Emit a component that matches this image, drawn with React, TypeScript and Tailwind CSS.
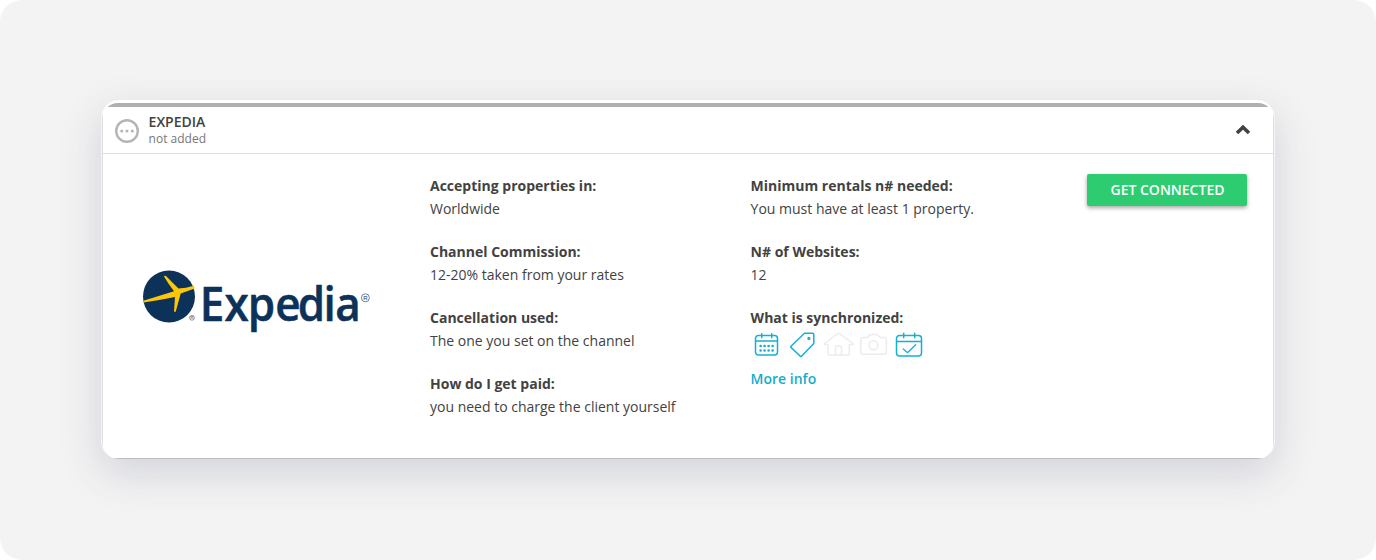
import type { ReactNode } from "react";

interface DetailProps {
  label: string;
  children: ReactNode;
}

function Detail({ label, children }: DetailProps) {
  return (
    <div className="h-[66px]">
      <dt className="font-bold leading-[23px]">{label}</dt>
      <dd className="leading-[23px]">{children}</dd>
    </div>
  );
}

function StatusIcon() {
  return (
    <svg className="mt-0.5" width="26" height="26" viewBox="0 0 26 26" fill="none">
      <circle cx="13" cy="13" r="10.8" stroke="#b5b5b5" strokeWidth="2.4" />
      <circle cx="7.7" cy="13" r="1.5" fill="#b5b5b5" />
      <circle cx="13" cy="13" r="1.5" fill="#b5b5b5" />
      <circle cx="18.3" cy="13" r="1.5" fill="#b5b5b5" />
    </svg>
  );
}

function ExpediaLogo() {
  return (
    <svg width="232" height="70" viewBox="0 0 232 70">
      <circle cx="29" cy="31.5" r="26" fill="#0c3259" />
      <path
        d="M3.3 35.8 34 26.2Q29 20 24 11.5Q23.8 10.2 26 11L38.5 23.5Q46 23.3 53.8 20.8L54.7 23.4 40.7 28.5 35.8 46.6Q34.6 47.6 34 46.2L35 32Q19 35.3 3.6 37.5Z"
        fill="#fdc608"
      />
      <circle cx="52" cy="52.8" r="2.4" fill="none" stroke="#0c3259" strokeWidth=".5" />
      <text x="50.6" y="54.3" fontSize="4" fontFamily="Liberation Sans, sans-serif" fill="#0c3259">
        R
      </text>
      <text
        x="59.7 84.5 107.8 135.2 157.8 183.6 195.3"
        y="51.6"
        transform="scale(1 1.08)"
        fontSize="44"
        fontWeight="600"
        fontFamily="Open Sans, sans-serif"
        fill="#0c3259"
        stroke="#0c3259"
        strokeWidth=".5"
        strokeLinejoin="round"
      >
        Expedia
      </text>
      <circle cx="225.4" cy="32.8" r="4" fill="none" stroke="#0c3259" strokeWidth=".6" />
      <text x="223.3" y="34.9" fontSize="6" fontFamily="Liberation Sans, sans-serif" fill="#0c3259">
        R
      </text>
    </svg>
  );
}

function SyncIcons() {
  return (
    <svg
      className="mt-0.5"
      width="172"
      height="28"
      viewBox="0 0 172 28"
      fill="none"
      strokeLinecap="round"
      strokeLinejoin="round"
    >
      {/* calendar */}
      <g stroke="#15b1d1" strokeWidth="1.5">
        <rect x="4.5" y="4.5" width="22" height="19.5" rx="3" />
        <path d="M5 10h21.5M10.7 2.7v4M20.7 2.7v4" />
      </g>
      <path
        d="M9.6 15h.01M13.6 15h.01M17.6 15h.01M21.6 15h.01M9.6 19.5h.01M13.6 19.5h.01M17.6 19.5h.01M21.6 19.5h.01"
        stroke="#15b1d1"
        strokeWidth="2.7"
      />
      {/* price tag */}
      <g stroke="#15b1d1" strokeWidth="1.5">
        <path d="M53.5 2.3h8q1.3 0 1.3 1.3v9L50.5 25.3q-.6.5-1.2 0L40 16.4q-.5-.6 0-1.2Z" />
        <circle cx="57.900" cy="7.400" r=".9" />
      </g>
      {/* house */}
      <g stroke="#ececec" strokeWidth="1.5">
        <path d="M77 13.500v9q0 1.500 1.500 1.500h18.300q1.500 0 1.500-1.500v-9h3.700q.5-.5 0-1L88.500 2.500q-.8-.6-1.600 0L73.400 12.500q-.5.500 0 1ZM84.500 24v-7.500q0-1.500 1.500-1.500h3q1.500 0 1.500 1.500v7.500" />
      </g>
      {/* camera */}
      <g stroke="#ececec" strokeWidth="1.5">
        <path d="M112 6.500h4.500l2-2.200q.5-.7 1.300-.7h6q.8 0 1.300.7l2 2.200h4q2.200 0 2.200 2.200v12.300q0 2.200-2.200 2.200H112q-2.200 0-2.200-2.200V8.700Q109.800 6.500 112 6.500Z" />
        <circle cx="122.500" cy="14.200" r="4.500" />
      </g>
      {/* calendar with a check mark */}
      <g stroke="#15b1d1" strokeWidth="1.5">
        <rect x="145.500" y="4.500" width="25" height="20.500" rx="3" />
        <path d="M146 10.500h24.500M152.700 2.200v4.500M163.700 2.200v4.500" />
        <path d="m152.300 17.900 3.700 3.300q.5.500 1 0l7.600-7.400" strokeWidth="1.3" />
      </g>
    </svg>
  );
}

export default function App() {
  return (
    <div className="bg-white">
      <div className="h-[560px] rounded-[22px] bg-[#f3f3f3] px-[101px] pt-[100px] font-['Open_Sans',sans-serif] text-sm text-[#424242]">
        <div className="h-[359px] w-[1174px] rounded-[18px] border-x border-[#f5f5f7] bg-white pt-[3px] shadow-[0_14px_42px_rgba(60,68,110,0.18)]">
          <div className="h-[356px] overflow-hidden rounded-t-[16px] rounded-b-[17px]">
            <div className="h-full border-x border-b border-x-[#dedede] border-b-[#bdbdc0]">
              <div className="h-1 bg-[#b0b0b0]" />

              {/* Header */}
              <div className="flex h-[47px] items-center border-b border-[#dedede] pl-[11px] pr-[22px]">
                <StatusIcon />
                <div className="ml-[8.6px] flex-1">
                  <h2 className="text-sm font-semibold leading-[17px]">EXPEDIA</h2>
                  <p className="text-xs leading-[17px] text-[#777]">not added</p>
                </div>
                <svg width="16" height="12" viewBox="0 0 16 12" fill="none">
                  <path d="m2 9 6-5.8L14 9" stroke="#424242" strokeWidth="3.6" />
                </svg>
              </div>

              {/* Channel details */}
              <div className="flex pt-5">
                <div className="w-[327px] pl-[37px] pt-[91px]">
                  <ExpediaLogo />
                </div>
                <dl className="w-[320.6px]">
                  <Detail label="Accepting properties in:">Worldwide</Detail>
                  <Detail label="Channel Commission:">12-20% taken from your rates</Detail>
                  <Detail label="Cancellation used:">The one you set on the channel</Detail>
                  <Detail label="How do I get paid:">you need to charge the client yourself</Detail>
                </dl>
                <div className="w-[336.4px]">
                  <dl>
                    <Detail label="Minimum rentals n# needed:">You must have at least 1 property.</Detail>
                    <Detail label="N# of Websites:">12</Detail>
                    <Detail label="What is synchronized:">
                      <SyncIcons />
                    </Detail>
                  </dl>
                  <a href="#" className="-mt-1 block font-semibold leading-[22px] text-[#15acca]">
                    More info
                  </a>
                </div>
                <button className="h-8 w-40 rounded-[2px] bg-[#2ecc71] pl-px font-semibold text-white shadow-[0_2px_4px_rgba(0,0,0,0.35)]">
                  GET CONNECTED
                </button>
              </div>
            </div>
          </div>
        </div>
      </div>
    </div>
  );
}
